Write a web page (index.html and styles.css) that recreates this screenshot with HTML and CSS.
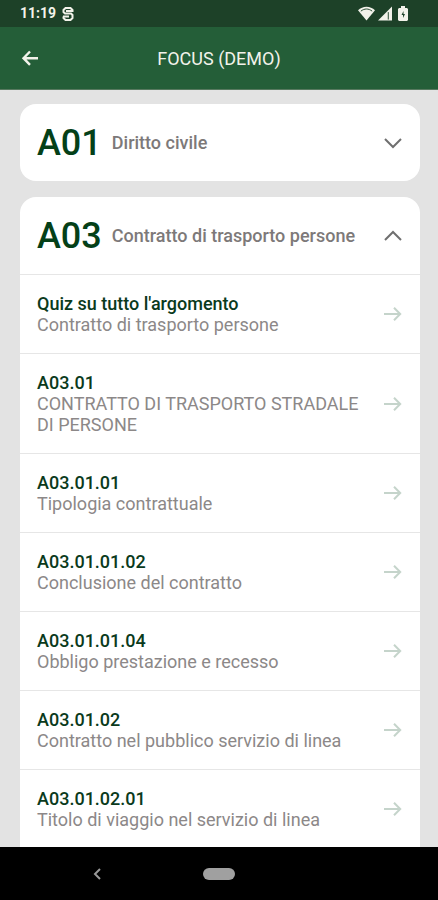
FILE: index.html
```html
<!DOCTYPE html>
<html lang="it">
<head>
    <meta charset="UTF-8">
    <meta name="viewport" content="width=device-width, initial-scale=1.0">
    <title>Focus (Demo)</title>
    <link rel="stylesheet" href="styles.css">
</head>
<body>
    <svg class="sprite" aria-hidden="true">
        <symbol id="arrow" viewBox="0 0 20 16">
            <path d="M1 8h16M11 1.8l6.2 6.2-6.2 6.2" />
        </symbol>
        <symbol id="chevron" viewBox="0 0 20 12">
            <path d="M2 2l8 8 8-8" />
        </symbol>
    </svg>

    <div class="status-bar">
        <span class="clock">11:19</span>
        <svg class="app-icon" viewBox="0 0 12 14">
            <path d="M10.500 5V3L8.500 1h-5L1.500 3v2L3 6.500h6L10.500 8v3L8.500 13h-5L1.500 11V9.500M4 4h7M1 9.500h6" />
        </svg>
        <div class="system-icons">
            <svg class="wifi" viewBox="0 0 18 15">
                <path d="M0 4C5-1 13-1 18 4L9 15z" />
                <path class="wifi-line" d="M3 5c4-3 8-3 12 0" />
            </svg>
            <svg class="signal" viewBox="0 0 15 15">
                <path d="M15 0v15H0z" />
                <path class="signal-line" d="M11 6v8" />
            </svg>
            <svg class="battery" viewBox="0 0 10 15">
                <path d="M3 0h4v2h2l1 1v11l-1 1H1l-1-1V3l1-1h2z" />
                <path class="bolt" d="M5.500 5L3.500 9h1.500v3l2-4H5.500z" />
            </svg>
        </div>
    </div>

    <header class="app-bar">
        <button class="back" type="button" aria-label="Indietro">
            <svg viewBox="0 0 20 16"><path d="M18 8.200H4M10 1.500L3.500 8.200l6.500 6.700" /></svg>
        </button>
        <h1>FOCUS (DEMO)</h1>
    </header>

    <main>
        <section class="card">
            <button class="card-header" type="button" aria-expanded="false">
                <span class="code">A01</span>
                <span class="name">Diritto civile</span>
                <svg class="chevron" viewBox="0 0 20 12"><use href="#chevron" /></svg>
            </button>
        </section>

        <section class="card open">
            <button class="card-header" type="button" aria-expanded="true">
                <span class="code">A03</span>
                <span class="name">Contratto di trasporto persone</span>
                <svg class="chevron up" viewBox="0 0 20 12"><use href="#chevron" /></svg>
            </button>
            <ul class="topics">
                <li><a href="#quiz">
                    <span class="topic"><strong>Quiz su tutto l'argomento</strong><span>Contratto di trasporto persone</span></span>
                    <svg class="arrow" viewBox="0 0 20 16"><use href="#arrow" /></svg>
                </a></li>
                <li><a href="#a0301">
                    <span class="topic"><strong>A03.01</strong><span>CONTRATTO DI TRASPORTO STRADALE DI PERSONE</span></span>
                    <svg class="arrow" viewBox="0 0 20 16"><use href="#arrow" /></svg>
                </a></li>
                <li><a href="#a030101">
                    <span class="topic"><strong>A03.01.01</strong><span>Tipologia contrattuale</span></span>
                    <svg class="arrow" viewBox="0 0 20 16"><use href="#arrow" /></svg>
                </a></li>
                <li><a href="#a03010102">
                    <span class="topic"><strong>A03.01.01.02</strong><span>Conclusione del contratto</span></span>
                    <svg class="arrow" viewBox="0 0 20 16"><use href="#arrow" /></svg>
                </a></li>
                <li><a href="#a03010104">
                    <span class="topic"><strong>A03.01.01.04</strong><span>Obbligo prestazione e recesso</span></span>
                    <svg class="arrow" viewBox="0 0 20 16"><use href="#arrow" /></svg>
                </a></li>
                <li><a href="#a030102">
                    <span class="topic"><strong>A03.01.02</strong><span>Contratto nel pubblico servizio di linea</span></span>
                    <svg class="arrow" viewBox="0 0 20 16"><use href="#arrow" /></svg>
                </a></li>
                <li><a href="#a03010201">
                    <span class="topic"><strong>A03.01.02.01</strong><span>Titolo di viaggio nel servizio di linea</span></span>
                    <svg class="arrow" viewBox="0 0 20 16"><use href="#arrow" /></svg>
                </a></li>
            </ul>
        </section>
    </main>

    <nav class="nav-bar">
        <button class="nav-back" type="button" aria-label="Indietro">
            <svg viewBox="0 0 8 12"><path d="M7 1L2 6l5 5" /></svg>
        </button>
        <button class="nav-home" type="button" aria-label="Home"></button>
        <span class="nav-empty"></span>
    </nav>
</body>
</html>
```
FILE: styles.css
```css
* {
    margin: 0;
    padding: 0;
    box-sizing: border-box;
}
body {
    display: flex;
    flex-direction: column;
    height: 100vh;
    font-family: Roboto, sans-serif;
    font-size: 18px;
    line-height: 21px;
    color: #7d7979;
    background: #e3e3e3;
}
button {
    border: none;
    background: none;
    font: inherit;
    color: inherit;
    cursor: pointer;
}
svg {
    display: block;
    fill: none;
    stroke: currentColor;
    stroke-width: 2;
}
.sprite {
    display: none;
}

/* top */
.status-bar {
    display: flex;
    flex-shrink: 0;
    align-items: center;
    height: 27px;
    padding: 0 30px 0 20px;
    color: #f2f2ea;
    background: #1d4128;
}
.clock {
    font-size: 14px;
    font-weight: 700;
}
.app-icon {
    width: 12px;
    height: 14px;
    margin-left: 6px;
}
.system-icons {
    display: flex;
    gap: 3px;
    margin-left: auto;
}
.system-icons svg {
    height: 15px;
    fill: currentColor;
    stroke: none;
}
.wifi {
    width: 17px;
}
.signal {
    width: 14px;
}
.battery {
    width: 10px;
    margin-left: 3px;
}
.system-icons .wifi-line,
.system-icons .signal-line {
    fill: none;
    stroke: #1d4128;
    stroke-width: 1;
}
.system-icons .bolt {
    fill: #1d4128;
}
.app-bar {
    display: grid;
    grid-template-columns: 20px 1fr 20px;
    flex-shrink: 0;
    align-items: center;
    height: 63px;
    padding: 0 20px;
    color: #f2f2ea;
    background: #245e38;
    border-bottom: 1px solid #57795f;
}
.app-bar h1 {
    font-size: 18px;
    font-weight: 400;
    text-align: center;
}
.back svg {
    width: 20px;
    height: 16px;
    stroke-width: 2.4;
}
.arrow {
    flex-shrink: 0;
    width: 20px;
    height: 16px;
}

/* list */
main {
    flex: 1;
    min-height: 0;
    padding: 14px 18px 0 20px;
    overflow-y: auto;
    scrollbar-width: none;
}
.card {
    margin-bottom: 16px;
    border-radius: 16px;
    background: #fff;
    overflow: hidden;
}
.card.open {
    margin-bottom: 0;
    border-radius: 16px 16px 0 0;
}
.card-header {
    display: flex;
    align-items: center;
    gap: 10px;
    width: 100%;
    height: 77px;
    padding: 0 17px;
    text-align: left;
}
.code {
    font-size: 36px;
    line-height: 42px;
    font-weight: 500;
    color: #044018;
}
.name {
    flex: 1;
    font-weight: 500;
}
.chevron {
    width: 20px;
    height: 12px;
    color: #6f6f6f;
}
.chevron.up {
    transform: rotate(180deg);
}
.topics {
    list-style: none;
}
.topics li {
    border-top: 1px solid #e6e6e6;
}
.topics a {
    display: flex;
    align-items: center;
    gap: 20px;
    padding: 18px 17px;
    color: inherit;
    text-decoration: none;
}
.topic {
    flex: 1;
}
.topic strong,
.topic span {
    display: block;
}
.topic strong {
    font-weight: 500;
    color: #0a3a1c;
}
.topic span {
    font-weight: 400;
    color: #8c8888;
}
.topics .arrow {
    color: #c5d4cb;
}

/* bottom */
.nav-bar {
    display: flex;
    flex-shrink: 0;
    align-items: center;
    justify-content: center;
    gap: 94px;
    height: 53px;
    background: #000;
}
.nav-back {
    padding: 8px;
    color: #999;
}
.nav-back svg {
    width: 8px;
    height: 12px;
}
.nav-home {
    width: 32px;
    height: 12px;
    border-radius: 6px;
    background: #a0a0a0;
}
.nav-empty {
    width: 24px;
}
```
